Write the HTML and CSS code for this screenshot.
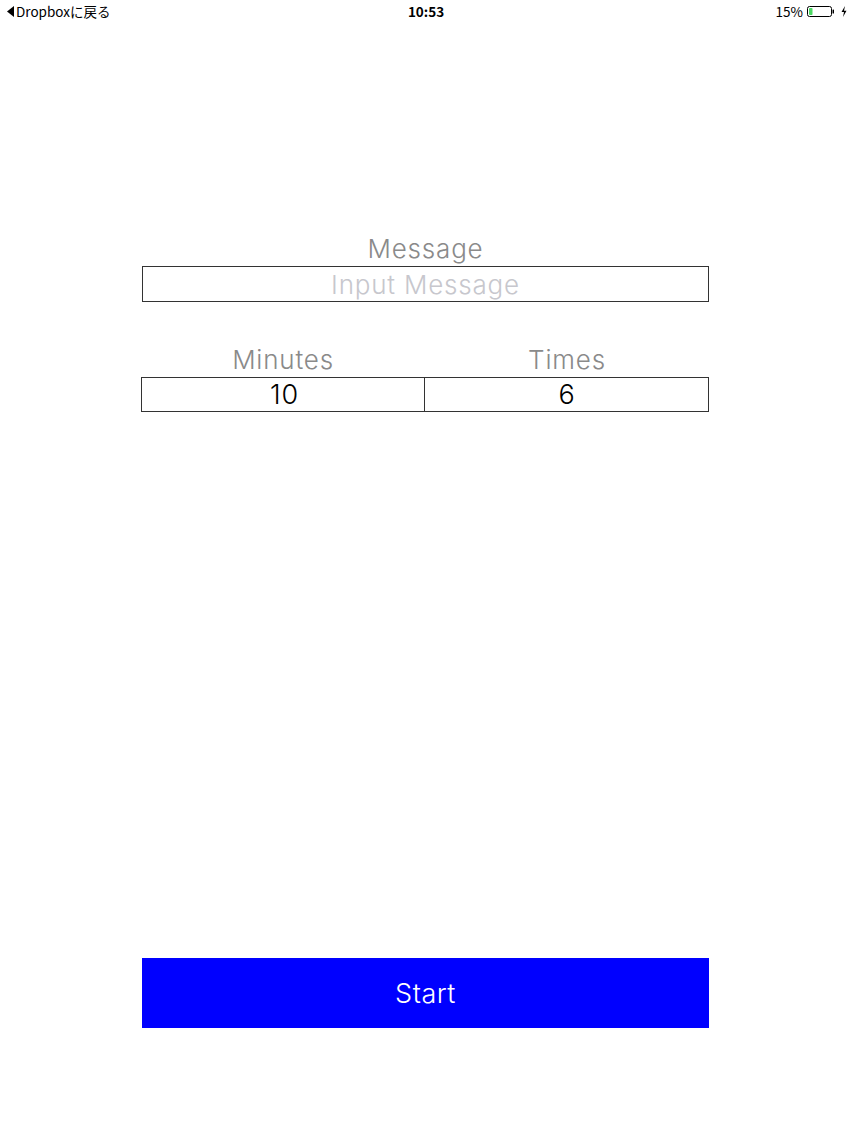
FILE: index.html
```html
<!DOCTYPE html>
<html lang="ja">
<head>
<meta charset="utf-8">
<title>Timer</title>
<link rel="stylesheet" href="styles.css">
</head>
<body>
<div class="statusbar">
  <div class="sb-left">
    <svg class="back-tri" width="7" height="11" viewBox="0 0 7 11"><path d="M7 0 L0 5.5 L7 11 Z" fill="#000"/></svg>
    <span>Dropboxに戻る</span>
  </div>
  <div class="sb-time">10:53</div>
  <div class="sb-right">
    <span class="pct">15%</span>
    <svg class="battery" width="28" height="11" viewBox="0 0 28 11">
      <rect x="0.5" y="0.5" width="24" height="10" rx="2" ry="2" fill="none" stroke="#000" stroke-width="1"/>
      <rect x="2" y="2" width="3.5" height="7" rx="0.8" fill="#4cd964"/>
      <rect x="25.5" y="3.5" width="1.5" height="4" rx="0.6" fill="#000"/>
    </svg>
    <svg class="bolt" width="6" height="11" viewBox="0 0 6 11"><path d="M4 0 L0.5 6 L3 6 L2 11 L5.5 4.8 L3 4.8 Z" fill="#000"/></svg>
  </div>
</div>

<main class="form">
  <div class="label">Message</div>
  <div class="field message">Input Message</div>

  <div class="pair">
    <div class="col">
      <div class="label">Minutes</div>
      <div class="field value left">10</div>
    </div>
    <div class="col">
      <div class="label">Times</div>
      <div class="field value right">6</div>
    </div>
  </div>

  <button class="start">Start</button>
</main>
</body>
</html>
```

FILE: styles.css
```css
html, body {
  margin: 0;
  padding: 0;
  background: #fff;
}
body {
  width: 852px;
  height: 1136px;
  font-family: Inter, "Noto Sans CJK JP", sans-serif;
  overflow: hidden;
}

.statusbar {
  height: 22px;
  display: flex;
  align-items: center;
  justify-content: space-between;
  padding: 0 5px 0 7px;
  font-family: "Noto Sans CJK JP", "Noto Sans", sans-serif;
  font-size: 13.5px;
  color: #000;
  position: relative;
}
.sb-left {
  display: flex;
  align-items: center;
  gap: 2px;
}
.back-tri { display: block; }
.sb-time {
  position: absolute;
  left: 0;
  right: 0;
  text-align: center;
  font-weight: 700;
  font-size: 13.5px;
  pointer-events: none;
}
.sb-right {
  display: flex;
  align-items: center;
  gap: 3px;
}
.battery { display: block; margin-left: 1px; }
.bolt { display: block; margin-left: 3px; }

.form {
  width: 567px;
  margin: 0 auto 0 142px;
  padding-top: 211px;
  display: flex;
  flex-direction: column;
}

.label {
  height: 30px;
  line-height: 32px;
  text-align: center;
  font-size: 26px;
  font-weight: 300;
  letter-spacing: 0.8px;
  color: #8a8a8a;
  margin-bottom: 3px;
}

.field {
  box-sizing: border-box;
  height: 36px;
  line-height: 35px;
  border: 1.3px solid #333;
  text-align: center;
  font-size: 26px;
  font-weight: 300;
  letter-spacing: 0.8px;
}
.message {
  color: #c7c7cd;
}

.pair {
  display: grid;
  grid-template-columns: 1fr 1fr;
  margin-top: 42px;
  margin-left: -1px;
}
.value {
  color: #000;
  height: 35px;
  line-height: 34px;
  font-size: 27px;
  padding-left: 3px;
}
.value.right {
  border-left: none;
  padding-left: 1px;
}

.start {
  margin-top: 546px;
  height: 70px;
  border: none;
  background: #0000ff;
  color: #fff;
  font-family: Inter, "Noto Sans CJK JP", sans-serif;
  font-size: 27px;
  font-weight: 300;
  letter-spacing: 0.5px;
  padding: 0;
}
```
